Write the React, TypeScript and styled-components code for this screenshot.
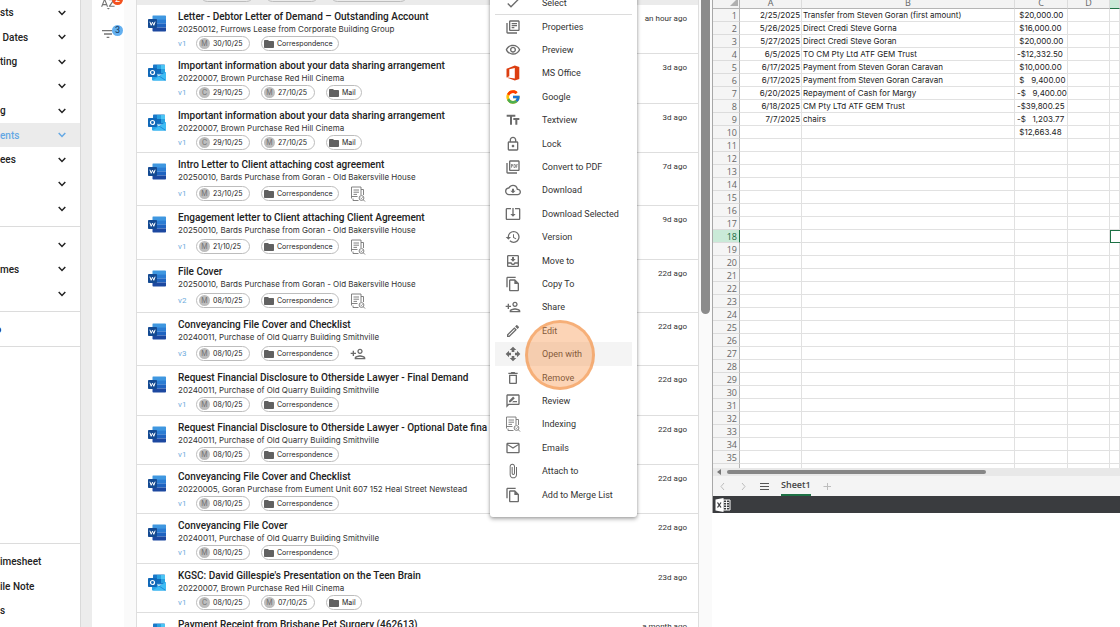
import React from 'react';
import styled, { createGlobalStyle, css } from 'styled-components';
import {
  MdAttachFile, MdCheck, MdFilterList, MdHistory, MdMailOutline, MdOpenWith,
  MdOutlineCloudDownload, MdOutlineDelete, MdOutlineEdit, MdOutlineFileCopy,
  MdOutlineLibraryBooks, MdOutlineLock, MdOutlineMoveToInbox, MdOutlinePersonAdd,
  MdOutlinePictureAsPdf, MdOutlineRateReview, MdOutlineSystemUpdateAlt,
  MdOutlineVisibility, MdSortByAlpha, MdTextFields, MdFolder,
} from 'react-icons/md';
import { FcGoogle } from 'react-icons/fc';

const GlobalStyle = createGlobalStyle`
  *, *::before, *::after { box-sizing: border-box; }
  body { margin: 0; background: #fff; font-family: Roboto, "Liberation Sans", sans-serif; color: #222; }
  button { font: inherit; color: inherit; background: none; border: 0; padding: 0; text-align: left; }
  svg { display: block; flex: none; }
`;

const Page = styled.div`
  display: grid;
  grid-template-columns: 81px 11px 44px minmax(0, 24fr) minmax(0, 17fr);
  height: 100vh;
  overflow: hidden;
`;

/* ---------- side navigation ---------- */

const Sidebar = styled.nav`
  display: flex;
  flex-direction: column;
  border-right: 1px solid #d9d9d9;
  min-height: 0;
`;

const NavGroup = styled.div<{ $first?: boolean; $footer?: boolean }>`
  padding: ${p => (p.$first ? '0 0 5px' : p.$footer ? '5px 0 4px' : '5px 0')};
  margin-top: ${p => (p.$footer ? 'auto' : '0')};
  border-top: ${p => (p.$first ? '0' : '1px solid #dcdcdc')};
`;

const NavItem = styled.button<{ $active?: boolean }>`
  display: flex;
  align-items: center;
  justify-content: space-between;
  width: 100%;
  height: 25px;
  padding-right: 14px;
  font-size: 10px;
  font-weight: 500;
  white-space: pre;
  color: ${p => (p.$active ? '#64a8e4' : '#222')};
  background: ${p => (p.$active ? '#ebebeb' : 'transparent')};
  &:nth-child(even) { height: 24px; }
`;

const NavLink = styled.a`
  display: flex;
  align-items: center;
  height: 24px;
  overflow: hidden;
  text-indent: -5px;
  font-size: 11px;
  font-weight: 700;
  color: #1b2a5c;
  text-decoration: none;
`;

const Gutter = styled.div`
  background: #ececec;
`;

const Chevron = () => (
  <svg width="8" height="6" viewBox="0 0 8 6" fill="none" stroke="currentColor" strokeWidth="1.5">
    <path d="M0.7 1L4 4.4L7.3 1" />
  </svg>
);

/* ---------- tool rail ---------- */

const Rail = styled.div`
  display: flex;
  flex-direction: column;
  align-items: flex-start;
  gap: 15px;
  padding-left: 8px;
  border-right: 12px solid #fafafa;
  overflow: hidden;
  margin-top: -5px;
`;

const RailButton = styled.button`
  position: relative;
  height: 16px;
  color: #757575;
`;

const Badge = styled.span<{ $color: string; $text: string }>`
  position: absolute;
  left: 12px;
  top: -1px;
  width: 11px;
  height: 11px;
  border-radius: 50%;
  background: ${p => p.$color};
  color: ${p => p.$text};
  font-size: 9px;
  line-height: 11px;
  text-align: center;
`;

/* ---------- documents ---------- */

const Documents = styled.main`
  position: relative;
  display: flex;
  min-width: 0;
  min-height: 0;
  background: #fafafa;
`;

const DocList = styled.div`
  flex: 1;
  min-width: 0;
  overflow: hidden;
  background: #fff;
  border-left: 1px solid #dedede;
  border-right: 1px solid #dedede;
`;

const Scroller = styled.div`
  width: 13px;
  padding: 0 1px 0 2px;
`;

const Thumb = styled.div`
  height: 50vh;
  border-radius: 0 0 5px 5px;
  background: #8b8b8b;
  width: 9px;
`;

const ScrolledRow = styled.div`
  display: flex;
  align-items: flex-end;
  gap: 11px;
  height: 5px;
  padding: 0 0 3px 63px;
  background: #ebebeb;
`;

const ChipEdge = styled.span<{ $wide?: boolean }>`
  width: ${p => (p.$wide ? 78 : 54)}px;
  height: 15px;
  border: 1px solid #bdbdbd;
  border-radius: 8px;
`;

const DocRow = styled.article`
  display: flex;
  align-items: flex-start;
  padding: 5px 11px 1px 11px;
  border-bottom: 1px solid #dedede;
  &:nth-child(3n) { padding-bottom: 2px; }
`;

const IconSlot = styled.div`
  width: 30px;
  flex: none;
  padding-top: 5px;
`;

const DocBody = styled.div`
  flex: 1;
  min-width: 0;
`;

const DocTitle = styled.h2`
  margin: 0;
  font-size: 10px;
  line-height: 14px;
  font-weight: 500;
  white-space: nowrap;
  color: #212121;
`;

const DocMatter = styled.p`
  margin: 0;
  font-family: Inter, Roboto, sans-serif;
  font-size: 8px;
  line-height: 11px;
  white-space: nowrap;
  color: #333;
`;

const DocMeta = styled.div<{ $tall?: boolean }>`
  display: flex;
  align-items: center;
  gap: 11px;
  height: ${p => (p.$tall ? 21 : 17)}px;
  color: #6b6b6b;
`;

const VersionTag = styled.span`
  width: 7px;
  font-size: 8px;
  color: #6fabdc;
`;

const Chip = styled.span<{ $folder?: boolean }>`
  display: flex;
  align-items: center;
  gap: ${p => (p.$folder ? 2 : 3)}px;
  min-width: ${p => (p.$folder ? 0 : 54)}px;
  height: 15px;
  padding: 0 5px 0 ${p => (p.$folder ? 1 : 2)}px;
  border: 1px solid #bdbdbd;
  border-radius: 8px;
  font-family: Inter, Roboto, sans-serif;
  font-size: 7px;
  color: #222;
  white-space: nowrap;
  > svg { color: #616161; }
`;

const Avatar = styled.span`
  width: 11px;
  height: 11px;
  border-radius: 50%;
  background: #bdbdbd;
  color: #6f6f6f;
  font-size: 7px;
  line-height: 11px;
  text-align: center;
`;

const Age = styled.time`
  padding-top: 3px;
  font-size: 8px;
  line-height: 12px;
  color: #333;
`;

const WordIcon = () => (
  <svg width="18" height="17" viewBox="0 0 18 17">
    <path d="M5 0.5h12.2a.8.8 0 0 1 .8.8V5H4.5V1.3a.8.8 0 0 1 .5-.8z" fill="#3f97e0" />
    <path d="M4.5 4.6H18v4H4.5z" fill="#2b7cd3" />
    <path d="M4.500 8.500H18v4H4.500z" fill="#1f63c0" />
    <path d="M4.500 12.500H18v3.200a.8.8 0 0 1-.8.8H5.300a.8.8 0 0 1-.8-.8z" fill="#1c48a0" />
    <rect x="0" y="4" width="9" height="9" rx="0.800" fill="#144a92" />
    <path d="M1.900 6.700L3.200 10.300L4.500 7.200L5.800 10.300L7.100 6.700" fill="none" stroke="#fff" strokeWidth="1" />
  </svg>
);

const OutlookIcon = () => (
  <svg width="18" height="17" viewBox="0 0 18 17">
    <rect x="5" y="0.500" width="12" height="10" rx="0.800" fill="#1a78c8" />
    <path d="M9 1h4v4H9z" fill="#28a0e0" />
    <path d="M13 1h4v4h-4z" fill="#4cc4f4" />
    <path d="M9 5h4v4H9z" fill="#0f6cbd" />
    <path d="M13 5h4v4h-4z" fill="#28a0e0" />
    <path d="M4 8L11 12L18 8V15.700a.8.8 0 0 1-.8.800H4.800a.8.8 0 0 1-.8-.8z" fill="#2aa4e8" />
    <path d="M18 8L4.500 16.500H17.200a.8.8 0 0 0 .8-.8z" fill="#3fbcf4" />
    <path d="M11 12l6.500 4.300" stroke="#1480d0" strokeWidth="0.800" />
    <rect x="0" y="4" width="9" height="9" rx="0.800" fill="#1068b8" />
    <circle cx="4.500" cy="8.500" r="2" fill="none" stroke="#fff" strokeWidth="1.200" />
  </svg>
);

const IndexIcon = () => (
  <svg width="16" height="16" viewBox="0 0 16 16" fill="none" stroke="#757575" strokeWidth="0.900">
    <path d="M1.500 12.500V1h9.500v8M3.500 4h5.500M3.500 6.200h5.500M3.500 8.400h3.500M1.500 10.500h6" />
    <path d="M11 3.500h2.500V9M3 12.500v2h5.500" />
    <circle cx="11.500" cy="12" r="2.400" />
    <path d="M13.200 13.700L15 15.500M10.600 12l.7.700 1.200-1.300" />
  </svg>
);

type Doc = {
  kind: 'word' | 'outlook';
  title: string;
  matter?: string;
  version?: string;
  dates?: [string, string][];
  folder?: string;
  extra?: 'index' | 'share';
  age: string;
};

const docs: Doc[] = [
  { kind: 'word', title: 'Letter - Debtor Letter of Demand – Outstanding Account', matter: '20250012, Furrows Lease from Corporate Building Group', version: 'v1', dates: [['M', '30/10/25']], folder: 'Correspondence', age: 'an hour ago' },
  { kind: 'outlook', title: 'Important information about your data sharing arrangement', matter: '20220007, Brown Purchase Red Hill Cinema', version: 'v1', dates: [['C', '29/10/25'], ['M', '27/10/25']], folder: 'Mail', age: '3d ago' },
  { kind: 'outlook', title: 'Important information about your data sharing arrangement', matter: '20220007, Brown Purchase Red Hill Cinema', version: 'v1', dates: [['C', '29/10/25'], ['M', '27/10/25']], folder: 'Mail', age: '3d ago' },
  { kind: 'word', title: 'Intro Letter to Client attaching cost agreement', matter: '20250010, Bards Purchase from Goran - Old Bakersville House', version: 'v1', dates: [['M', '23/10/25']], folder: 'Correspondence', extra: 'index', age: '7d ago' },
  { kind: 'word', title: 'Engagement letter to Client attaching Client Agreement', matter: '20250010, Bards Purchase from Goran - Old Bakersville House', version: 'v1', dates: [['M', '21/10/25']], folder: 'Correspondence', extra: 'index', age: '9d ago' },
  { kind: 'word', title: 'File Cover', matter: '20250010, Bards Purchase from Goran - Old Bakersville House', version: 'v2', dates: [['M', '08/10/25']], folder: 'Correspondence', extra: 'index', age: '22d ago' },
  { kind: 'word', title: 'Conveyancing File Cover and Checklist', matter: '20240011, Purchase of Old Quarry Building Smithville', version: 'v3', dates: [['M', '08/10/25']], folder: 'Correspondence', extra: 'share', age: '22d ago' },
  { kind: 'word', title: 'Request Financial Disclosure to Otherside Lawyer - Final Demand', matter: '20240011, Purchase of Old Quarry Building Smithville', version: 'v1', dates: [['M', '08/10/25']], folder: 'Correspondence', age: '22d ago' },
  { kind: 'word', title: 'Request Financial Disclosure to Otherside Lawyer - Optional Date fina', matter: '20240011, Purchase of Old Quarry Building Smithville', version: 'v1', dates: [['M', '08/10/25']], folder: 'Correspondence', age: '22d ago' },
  { kind: 'word', title: 'Conveyancing File Cover and Checklist', matter: '20220005, Goran Purchase from Eument Unit 607 152 Heal Street Newstead', version: 'v1', dates: [['M', '08/10/25']], folder: 'Correspondence', age: '22d ago' },
  { kind: 'word', title: 'Conveyancing File Cover', matter: '20240011, Purchase of Old Quarry Building Smithville', version: 'v1', dates: [['M', '08/10/25']], folder: 'Correspondence', age: '22d ago' },
  { kind: 'outlook', title: "KGSC: David Gillespie's Presentation on the Teen Brain", matter: '20220007, Brown Purchase Red Hill Cinema', version: 'v1', dates: [['C', '08/10/25'], ['M', '07/10/25']], folder: 'Mail', age: '23d ago' },
  { kind: 'outlook', title: 'Payment Receipt from Brisbane Pet Surgery (462613)', age: 'a month ago' },
];

/* ---------- context menu ---------- */

const Menu = styled.div`
  position: absolute;
  left: 354px;
  top: -14px;
  width: 147px;
  padding: 5px 5px 11px;
  background: #fff;
  border-radius: 3px;
  box-shadow: 0 2px 4px rgba(0, 0, 0, 0.32), 0 0 3px rgba(0, 0, 0, 0.18);
`;

const MenuTop = styled.div`
  border-bottom: 1px solid #dcdcdc;
`;

const MenuItem = styled.button<{ $active?: boolean }>`
  position: relative;
  display: flex;
  align-items: center;
  gap: 21px;
  width: 100%;
  height: 23px;
  padding-left: 10px;
  font-size: 9px;
  color: #333;
  white-space: nowrap;
  background: ${p => (p.$active ? '#f4f4f4' : 'transparent')};
  > svg { color: #6b6b6b; }
  &:nth-child(5n + 3), &:nth-child(5n + 5) { height: 24px; }
  ${p => p.$active && css`z-index: 1;`}
`;

const ClickMark = styled.span`
  position: absolute;
  left: 30px;
  top: -22px;
  width: 70px;
  height: 70px;
  border-radius: 50%;
  border: 3px solid rgba(242, 145, 70, 0.55);
  background: rgba(248, 148, 72, 0.4);
`;

const OfficeIcon = () => (
  <svg width="16" height="16" viewBox="0 0 16 16">
    <path d="M1.500 3.800L9.800 0.600L14.300 1.900V14L9.800 15.400L1.500 12.400L9.800 13.400V2.900L4.300 4.200V11.300L1.500 12.400Z" fill="#dc3e10" />
  </svg>
);

const menuItems: [string, React.ReactNode][] = [
  ['Properties', <MdOutlineLibraryBooks size={16} />],
  ['Preview', <MdOutlineVisibility size={16} />],
  ['MS Office', <OfficeIcon />],
  ['Google', <FcGoogle size={16} />],
  ['Textview', <MdTextFields size={16} />],
  ['Lock', <MdOutlineLock size={16} />],
  ['Convert to PDF', <MdOutlinePictureAsPdf size={16} />],
  ['Download', <MdOutlineCloudDownload size={16} />],
  ['Download Selected', <MdOutlineSystemUpdateAlt size={16} />],
  ['Version', <MdHistory size={16} />],
  ['Move to', <MdOutlineMoveToInbox size={16} />],
  ['Copy To', <MdOutlineFileCopy size={16} />],
  ['Share', <MdOutlinePersonAdd size={16} />],
  ['Edit', <MdOutlineEdit size={16} />],
  ['Open with', <MdOpenWith size={16} />],
  ['Remove', <MdOutlineDelete size={16} />],
  ['Review', <MdOutlineRateReview size={16} />],
  ['Indexing', <IndexIcon />],
  ['Emails', <MdMailOutline size={16} />],
  ['Attach to', <MdAttachFile size={16} />],
  ['Add to Merge List', <MdOutlineFileCopy size={16} />],
];

/* ---------- workbook ---------- */

const Workbook = styled.section`
  min-width: 0;
  align-self: start;
  border-left: 1px solid #a8a8a8;
`;

const SheetView = styled.div`
  height: 468px;
  overflow: hidden;
`;

const Sheet = styled.table`
  width: 100%;
  margin-top: -4px;
  table-layout: fixed;
  border-collapse: separate;
  border-spacing: 0;
  font-size: 9px;
  line-height: 11px;
  color: #222;
  td, th { height: 13px; padding: 1px 2px 0; white-space: pre; overflow: hidden; }
  td {
    padding: 1px 1px 0;
    font-family: Inter, Roboto, sans-serif;
    font-size: 8px;
    border-right: 1px solid #e1e1e1;
    border-bottom: 1px solid #e1e1e1;
  }
`;

const ColHead = styled.th<{ $on?: boolean }>`
  font-family: "Open Sans", sans-serif;
  font-weight: 400;
  color: #666;
  background: ${p => (p.$on ? '#caead8' : '#f3f3f3')};
  border-right: 1px solid #dcdcdc;
  border-bottom: 1px solid ${p => (p.$on ? '#1e7145' : '#b5b5b5')};
`;

const Corner = styled(ColHead)`
  && { padding: 0 1px 1px; border-right-color: #b5b5b5; }
  svg { margin-left: auto; }
`;

const RowHead = styled.th<{ $on?: boolean }>`
  font-family: "Open Sans", sans-serif;
  font-weight: 400;
  text-align: right;
  color: ${p => (p.$on ? '#1e6b43' : '#666')};
  background: ${p => (p.$on ? '#caead8' : '#f5f5f5')};
  border-right: 1px solid ${p => (p.$on ? '#1e7145' : '#b5b5b5')};
  border-bottom: 1px solid #dcdcdc;
`;

const DateCell = styled.td`
  text-align: right;
`;

const AmountCell = styled.td`
  && { padding-left: 2px; }
`;

const ActiveCell = styled.td`
  && { border: 1px solid #1e7145; border-right: 0; padding: 0; }
`;

const HScroll = styled.div`
  display: flex;
  align-items: center;
  gap: 6px;
  height: 8px;
  padding-left: 3px;
  background: #e8e8e8;
`;

const HThumb = styled.div`
  width: 64%;
  height: 4px;
  border-radius: 2px;
  background: #868686;
`;

const SheetTabs = styled.div`
  display: flex;
  align-items: center;
  height: 20px;
  padding-left: 5px;
  gap: 12px;
  background: #f4f4f4;
  color: #bdbdbd;
`;

const TabTool = styled.button<{ $dark?: boolean }>`
  color: ${p => (p.$dark ? '#555' : '#bdbdbd')};
`;

const SheetTab = styled.button`
  height: 20px;
  line-height: 18px;
  font-family: "Open Sans", sans-serif;
  font-size: 9px;
  font-weight: 600;
  color: #444;
  border-bottom: 2px solid #1e7145;
`;

const StatusBar = styled.div`
  display: flex;
  align-items: center;
  height: 17px;
  padding-left: 2px;
  background: #3a3c3f;
`;

const ExcelMark = () => (
  <svg width="16" height="14" viewBox="0 0 16 14">
    <path d="M8 2h7v10H8z" fill="none" stroke="#fff" />
    <path d="M9 4.500h5M9 7h5M9 9.500h5M11.500 2v10" stroke="#fff" strokeWidth="0.900" />
    <path d="M0.500 1.500L8.500 0V14L0.500 12.500Z" fill="#fff" />
    <path d="M2.500 4.500L6 9.500M6 4.500L2.500 9.500" stroke="#3a3c3f" strokeWidth="1.300" />
  </svg>
);

const entries: [string, string, string][] = [
  ['2/25/2025', 'Transfer from Steven Goran (first amount)', ' $20,000.00'],
  ['5/26/2025', 'Direct Credi Steve Gorna', ' $16,000.00'],
  ['5/27/2025', 'Direct Credi Steve Goran', ' $20,000.00'],
  ['6/5/2025', 'TO CM Pty Ltd ATF GEM Trust', '-$12,332.50'],
  ['6/17/2025', 'Payment from Steven Goran Caravan', ' $10,000.00'],
  ['6/17/2025', 'Payment from Steven Goran Caravan', ' $   9,400.00'],
  ['6/20/2025', 'Repayment of Cash for Margy', '-$   9,400.00'],
  ['6/18/2025', 'CM Pty LTd ATF GEM Trust', '-$39,800.25'],
  ['7/7/2025', 'chairs', '-$   1,203.77'],
  ['', '', ' $12,663.48'],
];

const sheetRows = Array.from({ length: 36 }, (_, i) => i + 1);

const Item = ({ label, active }: { label: string; active?: boolean }) => (
  <NavItem $active={active}><span>{label}</span><Chevron /></NavItem>
);

export default function App() {
  return (
    <>
      <GlobalStyle />
      <Page>
        <Sidebar>
          <NavGroup $first>
            <Item label="sts" />
            <Item label=" Dates" />
            <Item label="ting" />
            <Item label="" />
            <Item label="g" />
            <Item label="ents" active />
            <Item label="ees" />
            <Item label="" />
            <Item label="" />
          </NavGroup>
          <NavGroup>
            <Item label="" />
            <Item label="mes" />
            <Item label="" />
          </NavGroup>
          <NavGroup><NavLink href="#">o</NavLink></NavGroup>
          <NavGroup />
          <NavGroup $footer>
            <NavItem>imesheet</NavItem>
            <NavItem>ile Note</NavItem>
            <NavItem>s</NavItem>
          </NavGroup>
        </Sidebar>
        <Gutter />
        <Rail>
          <RailButton aria-label="Sort"><MdSortByAlpha size={16} /><Badge $color="#f4511e" $text="#fff">2</Badge></RailButton>
          <RailButton aria-label="Filter"><MdFilterList size={16} /><Badge $color="#64b0f0" $text="#12365c">3</Badge></RailButton>
        </Rail>

        <Documents>
          <DocList>
            <ScrolledRow><ChipEdge /><ChipEdge /><ChipEdge $wide /></ScrolledRow>
            {docs.map((d, i) => (
              <DocRow key={i}>
                <IconSlot>{d.kind === 'word' ? <WordIcon /> : <OutlookIcon />}</IconSlot>
                <DocBody>
                  <DocTitle>{d.title}</DocTitle>
                  {d.matter && <DocMatter>{d.matter}</DocMatter>}
                  {d.version && (
                    <DocMeta $tall={!!d.extra}>
                      <VersionTag>{d.version}</VersionTag>
                      {d.dates?.map(([who, date]) => (
                        <Chip key={who}><Avatar>{who}</Avatar>{date}</Chip>
                      ))}
                      <Chip $folder><MdFolder size={12} />{d.folder}</Chip>
                      {d.extra === 'index' && <IndexIcon />}
                      {d.extra === 'share' && <MdOutlinePersonAdd size={16} />}
                    </DocMeta>
                  )}
                </DocBody>
                <Age>{d.age}</Age>
              </DocRow>
            ))}
          </DocList>
          <Scroller><Thumb /></Scroller>
          <Menu role="menu">
            <MenuTop><MenuItem role="menuitem"><MdCheck size={16} />Select</MenuItem></MenuTop>
            <div>
              {menuItems.map(([label, icon]) => (
                <MenuItem key={label} role="menuitem" $active={label === 'Open with'}>
                  {icon}{label}
                  {label === 'Open with' && <ClickMark />}
                </MenuItem>
              ))}
            </div>
          </Menu>
        </Documents>

        <Workbook>
          <SheetView>
            <Sheet>
              <colgroup>
                <col style={{ width: 27 }} /><col style={{ width: 62 }} /><col style={{ width: 213 }} />
                <col style={{ width: 53 }} /><col style={{ width: 42 }} /><col />
              </colgroup>
              <thead>
                <tr>
                  <Corner><svg width="8" height="8"><path d="M8 0V8H0Z" fill="#b0b0b0" /></svg></Corner>
                  <ColHead>A</ColHead><ColHead>B</ColHead><ColHead>C</ColHead><ColHead>D</ColHead><ColHead $on />
                </tr>
              </thead>
              <tbody>
                {sheetRows.map(n => {
                  const [date, text, amount] = entries[n - 1] ?? ['', '', ''];
                  return (
                    <tr key={n}>
                      <RowHead $on={n === 18}>{n < 36 ? n : ''}</RowHead>
                      <DateCell>{date}</DateCell>
                      <td>{text}</td>
                      <AmountCell>{amount}</AmountCell>
                      <td />
                      {n === 18 ? <ActiveCell /> : <td />}
                    </tr>
                  );
                })}
              </tbody>
            </Sheet>
          </SheetView>
          <HScroll>
            <svg width="5" height="6"><path d="M5 0V6L1 3Z" fill="#777" /></svg>
            <HThumb />
          </HScroll>
          <SheetTabs>
            <TabTool aria-label="Previous sheet"><svg width="9" height="9" fill="none" stroke="currentColor"><path d="M6 1L3 4.500L6 8" /></svg></TabTool>
            <TabTool aria-label="Next sheet"><svg width="9" height="9" fill="none" stroke="currentColor"><path d="M3 1L6 4.500L3 8" /></svg></TabTool>
            <TabTool aria-label="All sheets" $dark><svg width="9" height="9" fill="none" stroke="currentColor"><path d="M0 1.500H9M0 4.500H9M0 7.500H9" /></svg></TabTool>
            <SheetTab>Sheet1</SheetTab>
            <TabTool aria-label="Add sheet"><svg width="9" height="9" fill="none" stroke="currentColor"><path d="M0.500 4.500H8M4.500 1V8" /></svg></TabTool>
          </SheetTabs>
          <StatusBar><ExcelMark /></StatusBar>
        </Workbook>
      </Page>
    </>
  );
}
